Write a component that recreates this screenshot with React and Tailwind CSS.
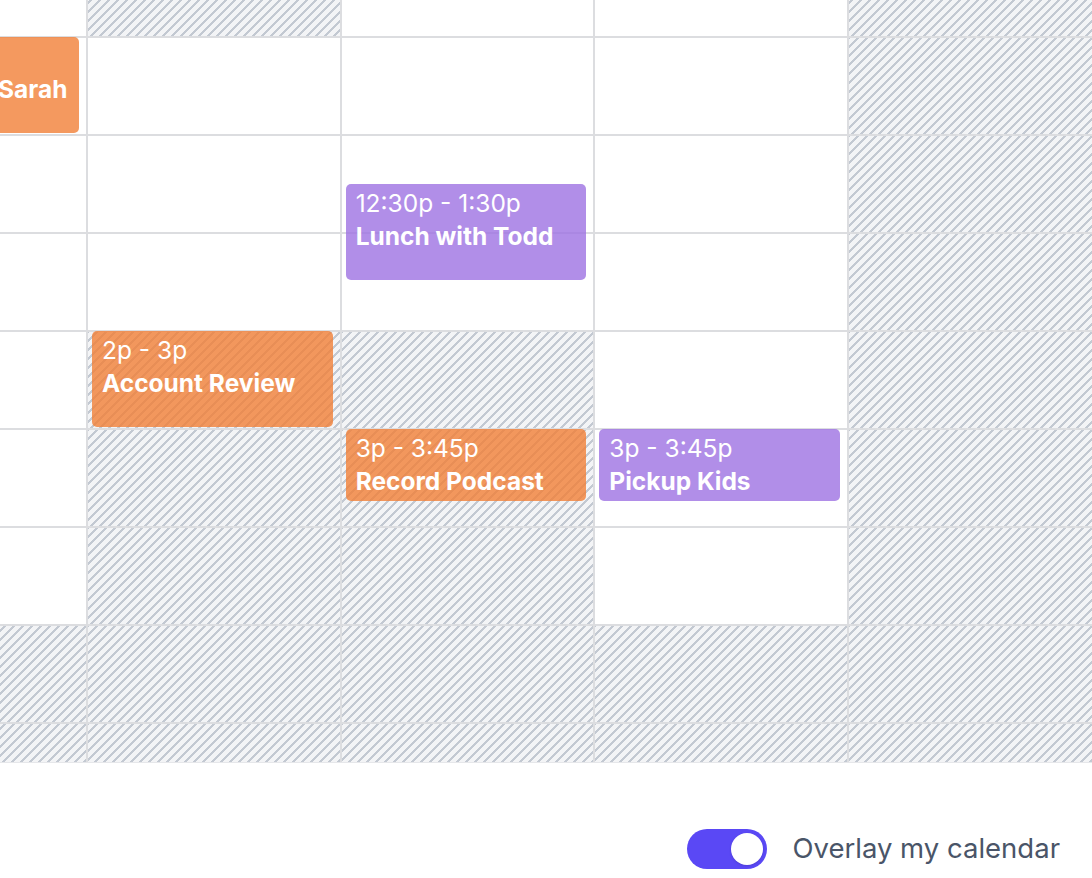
import { useState } from 'react';

// hour rows, 1 = blocked (hatched) cell, one flag per day column
const rows = [
  { hour: '10a', blocked: [0, 1, 0, 0, 1] },
  { hour: '11a', blocked: [0, 0, 0, 0, 1] },
  { hour: '12p', blocked: [0, 0, 0, 0, 1] },
  { hour: '1p', blocked: [0, 0, 0, 0, 1] },
  { hour: '2p', blocked: [0, 1, 1, 0, 1] },
  { hour: '3p', blocked: [0, 1, 1, 0, 1] },
  { hour: '4p', blocked: [0, 1, 1, 0, 1] },
  { hour: '5p', blocked: [1, 1, 1, 1, 1] },
  { hour: '6p', blocked: [1, 1, 1, 1, 1] },
];

const HOUR = 98;

const events = [
  { day: 0, row: 1, start: 0, length: 60, time: '11a - 12p', title: 'Review with Sarah', color: 'orange' },
  { day: 2, row: 2, start: 30, length: 60, time: '12:30p - 1:30p', title: 'Lunch with Todd', color: 'purple' },
  { day: 1, row: 4, start: 0, length: 60, time: '2p - 3p', title: 'Account Review', color: 'orange' },
  { day: 2, row: 5, start: 0, length: 45, time: '3p - 3:45p', title: 'Record Podcast', color: 'orange' },
  { day: 3, row: 5, start: 0, length: 45, time: '3p - 3:45p', title: 'Pickup Kids', color: 'purple' },
];

const colors = {
  orange: 'bg-[rgba(241,128,55,0.8)]',
  purple: 'bg-[rgba(158,114,226,0.8)]',
};

function Event({ ev }) {
  const top = (ev.start * HOUR) / 60 - 1;
  const height = (ev.length * HOUR) / 60 - 2;
  return (
    <div
      className={`absolute left-[4px] right-[7px] z-10 rounded-[5px] px-[10px] pt-[3px] text-white overflow-hidden ${colors[ev.color]}`}
      style={{ top, height }}
    >
      <div className="text-[24.5px] leading-[33px] whitespace-nowrap">{ev.time}</div>
      <div className="text-[24.5px] leading-[33px] font-bold whitespace-nowrap">{ev.title}</div>
    </div>
  );
}

export default function App() {
  const [overlay, setOverlay] = useState(true);

  return (
    <div className="w-[1092px] h-[878px] bg-white overflow-hidden" style={{ fontFamily: 'Inter, "Noto Sans", sans-serif' }}>
      <div className="h-[763px] overflow-hidden border-b border-[#e6e7ea]">
        <div className="ml-[-165.67px] mt-[-60px] grid w-max grid-cols-[repeat(5,251.67px)] auto-rows-[96px] gap-[2px] bg-[#dcdde0]">
          {rows.map((row, r) =>
            row.blocked.map((b, d) => (
              <div
                key={row.hour + d}
                className={`relative ${b ? 'bg-[#f3f4f6] bg-[linear-gradient(135deg,#c3c9d2_0%,#c3c9d2_6%,transparent_6%,transparent_44%,#c3c9d2_44%,#c3c9d2_56%,transparent_56%,transparent_94%,#c3c9d2_94%)] bg-size-[9px_9px]' : 'bg-white'}`}
              >
                {events
                  .filter((ev) => ev.day === d && ev.row === r)
                  .map((ev) => (
                    <Event key={ev.title} ev={ev} />
                  ))}
              </div>
            ))
          )}
        </div>
      </div>

      <div className="flex items-center justify-end pr-8 pt-[65px]">
        <button
          onClick={() => setOverlay(!overlay)}
          className={`flex h-10 w-20 items-center rounded-full p-1 ${overlay ? 'bg-[#5a48f5] justify-end' : 'bg-gray-300 justify-start'}`}
        >
          <span className="block size-8 rounded-full bg-white shadow-sm" />
        </button>
        <span className="ml-[25px] text-[27.5px] text-[#4a5568]">Overlay my calendar</span>
      </div>
    </div>
  );
}
